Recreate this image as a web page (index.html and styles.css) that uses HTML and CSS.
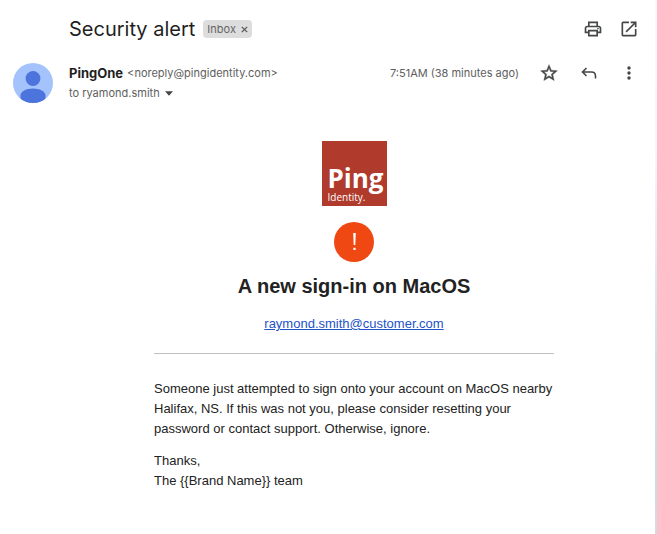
FILE: index.html
```html
<!DOCTYPE html>
<html lang="en">
<head>
<meta charset="utf-8">
<meta name="viewport" content="width=device-width, initial-scale=1">
<title>Security alert</title>
<link rel="stylesheet" href="styles.css">
</head>
<body>
<main class="mail">
  <header class="subject">
    <h1 class="subject-title">Security alert</h1>
    <button class="label" type="button" aria-label="Remove label Inbox"><span>Inbox</span><svg width="7" height="7" viewBox="0 0 7 7"><path d="M.8.8l5.4 5.4M6.2.8L.8 6.2" stroke="#555" stroke-width="1.2"/></svg></button>
    <div class="actions">
      <button class="icon" type="button" aria-label="Print"><svg width="20" height="20" viewBox="0 0 24 24"><path d="M19 8h-1V3H6v5H5c-1.660 0-3 1.340-3 3v6h4v4h12v-4h4v-6c0-1.660-1.340-3-3-3zM8 5h8v3H8V5zm8 12v2H8v-4h8v2zm2-2v-2H6v2H4v-4c0-.55.45-1 1-1h14c.55 0 1 .45 1 1v4h-2z"/><circle cx="18" cy="11.500" r="1"/></svg></button>
      <button class="icon" type="button" aria-label="Open in new window"><svg width="20" height="20" viewBox="0 0 24 24"><path d="M19 19H5V5h7V3H5c-1.110 0-2 .9-2 2v14c0 1.100.89 2 2 2h14c1.100 0 2-.9 2-2v-7h-2v7zM14 3v2h3.590l-9.830 9.830 1.410 1.410L19 6.410V10h2V3h-7z"/></svg></button>
    </div>
  </header>

  <section class="sender">
    <svg class="avatar" width="40" height="40" viewBox="0 0 40 40" role="img" aria-label="Sender">
      <clipPath id="round"><circle cx="20" cy="20" r="20"/></clipPath>
      <g clip-path="url(#round)"><path fill="#a4c2fb" d="M0 0h40v40H0z"/><circle cx="20" cy="15.500" r="7.400" fill="#4c74dc"/><path fill="#4c74dc" d="M7.500 40v-7.500c0-4.200 6-7 12.500-7s12.500 2.800 12.500 7V40z"/></g>
    </svg>
    <div class="sender-info">
      <div class="from"><strong class="name">PingOne</strong><span class="address">&lt;noreply@pingidentity.com&gt;</span></div>
      <div class="to"><span>to ryamond.smith</span><button class="details" type="button" aria-label="Show details"><svg width="8" height="5" viewBox="0 0 8 5"><path d="M0 .3h8L4 4.700z" fill="#444746"/></svg></button></div>
    </div>
    <div class="meta">
      <time class="time">7:51AM (38 minutes ago)</time>
      <div class="actions">
        <button class="icon" type="button" aria-label="Star"><svg width="20" height="20" viewBox="0 0 24 24"><path stroke="#444746" stroke-width=".5" d="M22 9.240l-7.190-.62L12 2 9.190 8.630 2 9.240l5.460 4.730L5.820 21 12 17.270 18.180 21l-1.630-7.030L22 9.240zM12 15.400l-3.760 2.270 1-4.280-3.320-2.880 4.380-.38L12 6.100l1.710 4.040 4.380.38-3.320 2.880 1 4.280L12 15.400z"/></svg></button>
        <button class="icon" type="button" aria-label="Reply"><svg width="20" height="20" viewBox="0 0 20 20"><path fill="none" stroke="#444746" stroke-width="1.600" d="M7.500 5L3.500 9l4 4M3.500 9H12.500c2.500 0 4 1.700 4 4v2.500"/></svg></button>
        <button class="icon" type="button" aria-label="More"><svg width="20" height="20" viewBox="0 0 20 20"><circle cx="10" cy="5" r="1.700"/><circle cx="10" cy="10" r="1.700"/><circle cx="10" cy="15" r="1.700"/></svg></button>
      </div>
    </div>
  </section>

  <article class="message">
    <div class="message-body">
      <div class="logo"><span class="logo-ping">Ping</span><span class="logo-identity">Identity.</span></div>
      <svg class="alert" width="40" height="40" viewBox="0 0 40 40" role="img" aria-label="Alert"><circle cx="20" cy="20" r="20" fill="#ef4813"/><path fill="#fff" d="M19.200 11h2.600l-.5 12h-1.600zM19.400 25.800h2.200V28h-2.200z"/></svg>
      <h2 class="headline">A new sign-in on MacOS</h2>
      <a class="account" href="mailto:raymond.smith@customer.com">raymond.smith@customer.com</a>
      <div class="text">
        <p>Someone just attempted to sign onto your account on MacOS nearby Halifax, NS. If this was not you, please consider resetting your password or contact support. Otherwise, ignore.</p>
        <p>Thanks,<br>The {{Brand Name}} team</p>
      </div>
    </div>
  </article>
</main>
</body>
</html>
```
FILE: styles.css
```css
* {
  box-sizing: border-box;
}

body {
  margin: 0;
  min-height: 100vh;
  display: flex;
  background: linear-gradient(#f8fafe 0, #f2f5fc 30%, #cfdeed 65%, #cbd9e8 88%, #d6dae2 100%);
  font-family: Inter, "Liberation Sans", sans-serif;
  color: #222;
}

.mail {
  flex: 1;
  margin-right: 2px;
  padding: 16px 16px 40px 13px;
  background: #fff;
}

button {
  border: 0;
  padding: 0;
  background: none;
  font: inherit;
  color: inherit;
}

svg {
  display: block;
}

.subject {
  display: flex;
  align-items: center;
  height: 26px;
  padding-left: 56px;
}

.subject-title {
  margin: 0;
  font-size: 20px;
  font-weight: 400;
  line-height: 26px;
  color: #1f1f1f;
}

.label {
  display: flex;
  align-items: center;
  gap: 5px;
  height: 18px;
  margin-left: 8px;
  padding: 0 4px;
  border-radius: 4px;
  background: #ddd;
  font-size: 11px;
  color: #666;
}

.actions {
  display: flex;
  gap: 20px;
}

.subject .actions {
  gap: 16px;
  margin-left: auto;
}

.icon {
  width: 20px;
  height: 20px;
  fill: #444746;
}

.sender {
  display: flex;
  gap: 16px;
  margin-top: 21px;
}

.avatar {
  flex: none;
}

.sender-info {
  font-size: 11px;
  line-height: 20px;
  color: #5e5e5e;
}

.from {
  display: flex;
  gap: 4px;
}

.name {
  font-size: 13px;
  font-weight: 700;
  color: #1f1f1f;
}

.to {
  display: flex;
  align-items: center;
  gap: 5px;
}

.meta {
  display: flex;
  align-items: center;
  gap: 20px;
  height: 20px;
  margin-left: auto;
}

.time {
  font-size: 11px;
  color: #5e5e5e;
}

.message {
  display: flex;
  justify-content: center;
  margin-top: 38px;
  padding-left: 56px;
  font-family: "Liberation Sans", sans-serif;
}

.message-body {
  display: flex;
  flex-direction: column;
  align-items: center;
  width: 400px;
}

.logo {
  display: flex;
  flex-direction: column;
  justify-content: flex-end;
  width: 65px;
  height: 65px;
  padding: 0 0 3px 6px;
  background: #b03a2b;
  font-family: "Open Sans", sans-serif;
  color: #fff;
}

.logo-ping {
  font-size: 26px;
  font-weight: 700;
  line-height: 26px;
}

.logo-identity {
  font-size: 10px;
  line-height: 12px;
}

.alert {
  margin-top: 16px;
}

.headline {
  margin: 12px 0 0;
  font-size: 20px;
  line-height: 24px;
}

.account {
  margin-top: 18px;
  font-size: 13px;
  line-height: 16px;
  color: #2353c8;
}

.text {
  align-self: stretch;
  margin-top: 21px;
  padding-top: 13px;
  border-top: 1px solid #bfbfbf;
  font-size: 13px;
  line-height: 20px;
}

.text p {
  margin: 12px 0;
}
```
